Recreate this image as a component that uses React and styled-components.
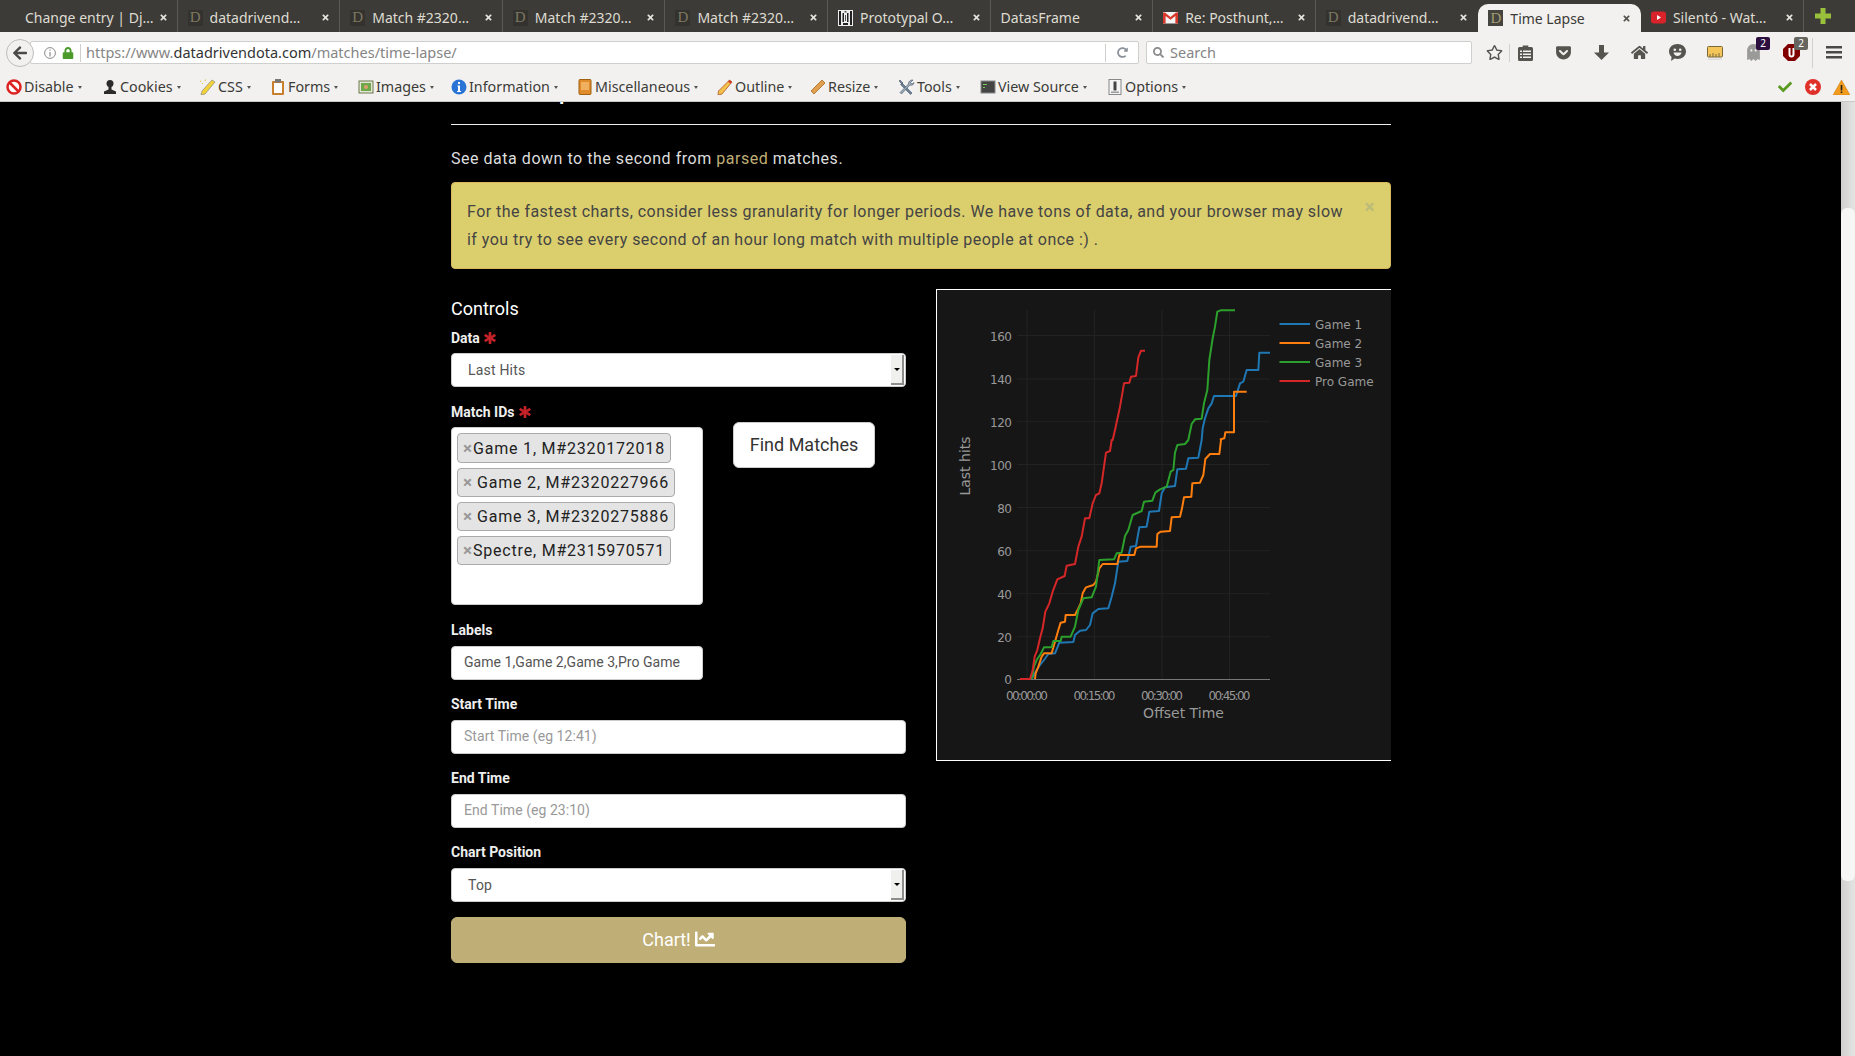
import React from 'react';
import styled, { createGlobalStyle } from 'styled-components';
import { FaAsterisk, FaChartLine, FaRegStar, FaHome, FaGhost, FaGetPocket, FaCheck, FaSearch, FaArrowLeft, FaRedoAlt, FaLock, FaTimes } from 'react-icons/fa';

const GlobalStyle = createGlobalStyle`
  html, body {
    margin: 0;
    height: 100%;
    overflow: hidden;
    background: #000;
    font-family: Roboto, "Liberation Sans", sans-serif;
  }
  * { box-sizing: border-box; }
`;

const Page = styled.div`
  display: flex;
  flex-direction: column;
  height: 100vh;
`;

/* browser chrome */
const ChromeFont = `"Noto Sans", "Open Sans", sans-serif`;

const TabStrip = styled.div`
  display: flex;
  align-items: flex-end;
  height: 32px;
  padding-left: 15px;
  background: #3c3b37;
  font-family: ${ChromeFont};
`;

const Tab = styled.div`
  position: relative;
  display: flex;
  align-items: center;
  flex: 0 0 162.6px;
  height: ${p => (p.$active ? '28px' : '32px')};
  padding: ${p => (p.$active ? '0' : '3px')} 8px 0 10px;
  font-size: 14px;
  color: ${p => (p.$active ? '#3c3b37' : '#dfdbd2')};
  background: ${p => (p.$active ? '#f2f1f0' : 'transparent')};
  border-right: 1px solid ${p => (p.$active || p.$beforeActive ? 'transparent' : '#5a5954')};
  border-radius: ${p => (p.$active ? '10px 10px 0 0' : '0')};
`;

const TabLabel = styled.span`
  flex: 1;
  white-space: nowrap;
  overflow: hidden;
`;

const TabClose = styled.span`
  display: flex;
  width: 10px;
  margin-left: 4px;
  color: ${p => (p.$active ? '#55544f' : '#e6e3dc')};
  font-size: 9px;
`;

const Favicon = styled.span`
  display: flex;
  align-items: center;
  justify-content: center;
  flex: 0 0 15px;
  height: 16px;
  margin-right: 7px;
  background: ${p => (p.$active ? '#45443f' : '#33322e')};
  color: ${p => (p.$active ? '#a39a70' : '#7d7862')};
  font-family: "Liberation Serif", serif;
  font-size: 15px;
  line-height: 1;
`;

const IconSlot = styled.span`
  display: flex;
  flex: 0 0 15px;
  margin-right: 7px;
`;

const AddTab = styled.span`
  display: flex;
  align-items: center;
  justify-content: center;
  width: 38px;
  height: 32px;
`;

const NavBar = styled.div`
  display: flex;
  align-items: center;
  height: 41px;
  padding-left: 6px;
  background: #f2f1f0;
  font-family: ${ChromeFont};
`;

const BackButton = styled.div`
  position: relative;
  z-index: 1;
  display: flex;
  align-items: center;
  justify-content: center;
  flex: 0 0 28px;
  height: 28px;
  margin-right: -4px;
  border: 1px solid #bdbdbb;
  border-radius: 50%;
  background: #f2f1f0;
  color: #4a4945;
  font-size: 16px;
`;

const InputBar = styled.div`
  display: flex;
  align-items: center;
  flex: 0 0 ${p => p.$w}px;
  height: 23px;
  margin-left: ${p => p.$ml || 0}px;
  background: #fff;
  border: 1px solid #cfcfcd;
  border-radius: 2px;
  font-size: 14.5px;
  color: #858585;
  white-space: nowrap;
`;

const UrlIcons = styled.span`
  display: flex;
  align-items: center;
  gap: 6px;
  width: 50px;
  padding-left: 13px;
  height: 100%;
`;

const LockIcon = styled.span`
  display: flex;
  color: #4c9a2a;
  font-size: 12px;
`;

const BarSep = styled.span`
  width: 1px;
  height: 18px;
  background: #cfcfcd;
`;

const UrlText = styled.span`
  flex: 1;
  margin-top: -2px;
  padding-left: 5px;
`;

const SearchText = styled.span`
  margin-top: -2px;
`;

const UrlHost = styled.span`
  color: #333;
`;

const Reload = styled.span`
  display: flex;
  align-items: center;
  justify-content: center;
  width: 32px;
  color: #8b9299;
  font-size: 11px;
`;

const SearchIcon = styled.span`
  display: flex;
  padding: 0 6px 0 6px;
  color: #8a8a8a;
  font-size: 11px;
`;

const Slot = styled.span`
  position: relative;
  display: flex;
  align-items: center;
  justify-content: center;
  flex: 0 0 ${p => p.$w || 38}px;
  margin-left: ${p => p.$ml || 0}px;
  margin-right: ${p => p.$mr || 0}px;
  height: 24px;
  color: ${p => p.$color || '#55544f'};
  font-size: 17px;
`;

const VSep = styled.span`
  flex: 0 0 1px;
  height: ${p => p.$h || 18}px;
  margin-left: ${p => p.$ml || 0}px;
  background: #d0d0ce;
`;

const Badge = styled.span`
  position: absolute;
  top: -4px;
  left: 22px;
  width: 14px;
  height: 13px;
  background: ${p => p.$bg};
  color: #fff;
  font-size: 10px;
  line-height: 13px;
  text-align: center;
  border-radius: 2px;
`;

const DevBar = styled.div`
  display: flex;
  align-items: center;
  height: 29px;
  padding-left: 6px;
  background: #f2f1f0;
  border-bottom: 1px solid #c9c9c7;
  font-family: ${ChromeFont};
  font-size: 14.3px;
  color: #3c3b37;
`;

const DevItem = styled.div`
  display: flex;
  align-items: center;
  flex: 0 0 ${p => p.$w}px;
  white-space: nowrap;
`;

const DevIcon = styled.span`
  display: flex;
  flex: 0 0 16px;
  margin-right: 2px;
`;

const DevLabel = styled.span`
  margin-top: -2px;
`;

const Caret = styled.span`
  width: 0;
  height: 0;
  margin-left: 4px;
  border-left: 2.5px solid transparent;
  border-right: 2.5px solid transparent;
  border-top: 3px solid #55544f;
`;

const DevStatus = styled.div`
  display: flex;
  margin-left: auto;
`;

const StatusIcon = styled.span`
  display: flex;
  align-items: center;
  justify-content: center;
  width: 28px;
  color: #5a9a1e;
  font-size: 14px;
`;

/* page */
const Viewport = styled.div`
  display: flex;
  flex: 1;
  min-height: 0;
`;

const Main = styled.main`
  flex: 1;
  min-width: 0;
  padding-left: 1px;
  overflow: hidden;
  background: #000;
`;

const Container = styled.div`
  width: 940px;
  margin: 0 auto;
`;

const PageHeader = styled.div`
  height: 23px;
  margin-bottom: 22px;
  border-bottom: 1px solid #eee;
  overflow: hidden;
  display: flex;
  align-items: flex-end;
`;

const Title = styled.h2`
  margin: 0 0 20px;
  font-size: 30px;
  font-weight: 400;
  line-height: 33px;
  color: #fff;
`;

const Lead = styled.p`
  margin: 0 0 11px;
  font-size: 16px;
  line-height: 24px;
  letter-spacing: 0.53px;
  color: #ddd;
`;

const Parsed = styled.a`
  color: #bfae76;
`;

const Alert = styled.div`
  position: relative;
  height: 87px;
  margin-bottom: 20px;
  padding: 15px 40px 15px 15px;
  background: #dbce6c;
  border: 1px solid #d6b95c;
  border-radius: 4px;
  font-size: 16px;
  line-height: 28px;
  letter-spacing: 0.46px;
  color: #444;
`;

const AlertClose = styled.span`
  position: absolute;
  top: 14px;
  right: 15px;
  font-size: 19px;
  font-weight: 700;
  line-height: 20px;
  color: #bcbb7a;
`;

const Columns = styled.div`
  display: grid;
  grid-template-columns: 455px 455px;
  column-gap: 30px;
`;

const SectionTitle = styled.h4`
  margin: 0;
  height: 38px;
  padding-top: 1px;
  font-size: 18px;
  font-weight: 400;
  line-height: 38px;
  color: #fff;
`;

const Label = styled.label`
  display: flex;
  align-items: center;
  gap: 4px;
  height: 20px;
  margin-bottom: 6px;
  padding-top: ${p => (p.$plain ? 0 : 2)}px;
  font-size: 14px;
  font-weight: 700;
  color: #eee;
`;

const Required = styled.span`
  display: flex;
  color: #c9242b;
  font-size: 12px;
  svg {
    stroke: currentColor;
    stroke-width: 30;
  }
`;

const Group = styled.div`
  margin-bottom: ${p => p.$mb || 14}px;
`;

const SelectBox = styled.div`
  display: flex;
  align-items: center;
  justify-content: space-between;
  height: 34px;
  padding: 0 1px 0 16px;
  background: #fff;
  border: 1px solid #ccc;
  border-radius: 4px;
  font-size: 14px;
  letter-spacing: 0.2px;
  color: #555;
`;

const SelectArrow = styled.span`
  display: flex;
  align-items: center;
  justify-content: center;
  width: 13px;
  height: 30px;
  background: #f0f0ee;
  border-right: 2px solid #8d8d8b;
  border-bottom: 2px solid #8d8d8b;
  &::after {
    content: '';
    border-left: 3px solid transparent;
    border-right: 3px solid transparent;
    border-top: 3px solid #000;
  }
`;

const TextInput = styled.input`
  display: block;
  width: 100%;
  height: 34px;
  padding: 0 12px 2px;
  background: #fff;
  border: 1px solid #ccc;
  border-radius: 4px;
  font-family: Roboto, sans-serif;
  font-size: 14px;
  letter-spacing: 0.05px;
  color: #555;
  &::placeholder {
    color: #999;
    opacity: 1;
  }
`;

const MatchRow = styled.div`
  display: flex;
  gap: 30px;
`;

const MatchField = styled.div`
  flex: 0 0 252px;
`;

const MultiBox = styled.div`
  display: flex;
  flex-direction: column;
  align-items: flex-start;
  gap: 5px;
  height: 178px;
  padding: 5px;
  background: #fff;
  border: 1px solid #ccc;
  border-radius: 4px;
`;

const Chip = styled.div`
  display: flex;
  align-items: center;
  height: 29px;
  padding: 0 5px 0 7px;
  background: #e4e4e4;
  border: 1px solid #aaa;
  border-radius: 4px;
  font-size: 16px;
  letter-spacing: 0.8px;
  color: #222;
  white-space: nowrap;
  &:first-child {
    height: 30px;
    padding-top: 1px;
  }
`;

const ChipRemove = styled.span`
  width: ${p => (p.$wide ? '14px' : '10px')};
  margin-left: -2px;
  font-size: 17px;
  font-weight: 700;
  letter-spacing: 0;
  line-height: 1;
  color: #999;
`;

const FindButton = styled.button`
  align-self: flex-start;
  height: 46px;
  width: 142px;
  margin-top: 21px;
  padding: 0 0 2px;
  background: #fff;
  border: 1px solid #ccc;
  border-radius: 6px;
  font-family: Roboto, sans-serif;
  font-size: 18px;
  color: #333;
`;

const ChartButton = styled.button`
  display: flex;
  align-items: center;
  justify-content: center;
  gap: 4px;
  width: 100%;
  height: 46px;
  padding: 0 0 2px;
  background: #bfae76;
  border: 1px solid #bfae76;
  border-radius: 6px;
  font-family: Roboto, sans-serif;
  font-size: 18px;
  color: #fff;
  svg {
    font-size: 20px;
  }
`;

const ChartBox = styled.div`
  height: 472px;
  border: 1px solid #fff;
  border-right: 0;
  background: #161616;
`;

const ChartSvg = styled.svg`
  display: block;
  width: 454px;
  height: 470px;
  font-family: "DejaVu Sans", sans-serif;
`;

const Scrollbar = styled.div`
  flex: 0 0 14px;
  padding-top: 106px;
  background: linear-gradient(to right, #d0d0ce, #e4e4e2);
`;

const ScrollThumb = styled.div`
  height: 673px;
  background: #f6f6f5;
  border-radius: 6px;
`;

/* favicons and toolbar drawings */
const GmailIcon = () => (
  <svg width="15" height="15" viewBox="0 0 15 15">
    <rect y="2" width="15" height="11.5" fill="#f4f4f4" />
    <path d="M0 2.5v11h2.6V6l4.9 3.8L12.4 6v7.5H15v-11h-2L7.5 7 2 2.5z" fill="#d8382c" />
  </svg>
);
const YoutubeIcon = () => (
  <svg width="15" height="15" viewBox="0 0 15 15">
    <rect y="1.5" width="15" height="12" rx="3" fill="#d9232a" />
    <path d="M6 5l4 2.5L6 10z" fill="#fff" />
  </svg>
);
const ProtoIcon = () => (
  <svg width="15" height="16" viewBox="0 0 15 16">
    <rect width="15" height="16" fill="#eee" />
    <path d="M1 1h2v14H1zM4.5 3h1.5v9H4.5zM9 3h1.5v9H9zM12 1h2v14h-2zM5 13h5v2H5z" fill="#222" />
    <path d="M6.5 1h2v1.5h-2zM7 5h1v6H7z" fill="#555" />
  </svg>
);
const PlusIcon = () => (
  <svg width="16" height="16" viewBox="0 0 16 16">
    <path d="M5.5 0h5v5.5H16v5h-5.5V16h-5v-5.5H0v-5h5.5z" fill="#9ac13c" />
  </svg>
);
const ClipboardIcon = () => (
  <svg width="15" height="17" viewBox="0 0 15 17">
    <path d="M1.5 3h3.2V1.5h5.6V3h3.2A1.5 1.5 0 0 1 15 4.5v11a1.5 1.5 0 0 1-1.5 1.5h-12A1.5 1.5 0 0 1 0 15.5v-11A1.5 1.5 0 0 1 1.5 3z" fill="#55544f" />
    <path d="M2 6.5h2V8H2zM5 6.5h8V8H5zM2 9.5h2V11H2zM5 9.5h8V11H5zM2 12.5h2V14H2zM5 12.5h8V14H5z" fill="#f2f1f0" />
  </svg>
);
const DownloadIcon = () => (
  <svg width="15" height="15" viewBox="0 0 15 15">
    <path d="M5 0h5v7.5h5L7.5 15 0 7.5h5z" fill="#55544f" />
  </svg>
);
const ChatIcon = () => (
  <svg width="17" height="17" viewBox="0 0 17 17">
    <path d="M8.5 0C13.2 0 17 3.1 17 7.5S13.2 15 8.5 15c-1 0-2-.2-2.9-.5L2 17l.6-4C1 11.6 0 9.7 0 7.5 0 3.1 3.8 0 8.5 0z" fill="#55544f" />
    <circle cx="5.8" cy="5.8" r="1.3" fill="#f2f1f0" />
    <circle cx="11.2" cy="5.8" r="1.3" fill="#f2f1f0" />
    <path d="M4.5 8.5h8c-.5 2.2-2 3.5-4 3.5s-3.500-1.300-4-3.500z" fill="#f2f1f0" />
  </svg>
);
const RulerIcon = () => (
  <svg width="16" height="14" viewBox="0 0 16 14">
    <rect x=".5" y=".5" width="15" height="10.5" rx="1" fill="#f4c65a" stroke="#7a6a3a" />
    <path d="M3 11V8M6 11V7M9 11V8M12 11V7" stroke="#7a6a3a" />
    <rect x="1" y="12.5" width="14" height="1.5" fill="#ddd" />
  </svg>
);
const ShieldIcon = () => (
  <svg width="17" height="17" viewBox="0 0 17 17">
    <path d="M5 0h7l5 5v7l-5 5H5l-5-5V5z" fill="#800000" />
    <path d="M5.5 4h2v6c0 1 .4 1.5 1 1.5s1-.5 1-1.5V4h2v6.5c0 2-1.2 3-3 3s-3-1-3-3z" fill="#fff" />
  </svg>
);
const MenuIcon = () => (
  <svg width="16" height="13" viewBox="0 0 16 13">
    <path d="M0 0h16v2.5H0zM0 5h16v2.5H0zM0 10h16v2.5H0z" fill="#4a4945" />
  </svg>
);
const InfoIcon = () => (
  <svg width="12" height="12" viewBox="0 0 12 12">
    <circle cx="6" cy="6" r="5.4" fill="none" stroke="#8b8b8b" />
    <path d="M5.4 2.5h1.2v1.300H5.4zM5.4 5h1.2v4.5H5.4z" fill="#8b8b8b" />
  </svg>
);

const dev = {
  disable: (
    <svg width="16" height="16" viewBox="0 0 16 16">
      <circle cx="8" cy="8" r="6.5" fill="#fff" stroke="#d22" strokeWidth="2.5" />
      <path d="M3.5 3.5l9 9" stroke="#d22" strokeWidth="2.5" />
    </svg>
  ),
  cookies: (
    <svg width="16" height="16" viewBox="0 0 16 16">
      <circle cx="8" cy="4.5" r="3.5" fill="#2b2b2b" />
      <path d="M6.5 7h3v3.5L14 12.5V15H2v-2.5l4.5-2z" fill="#2b2b2b" />
    </svg>
  ),
  css: (
    <svg width="16" height="16" viewBox="0 0 16 16">
      <path d="M12 1l3 2L5 15l-4 1 1-4z" fill="#f4d33a" stroke="#777" strokeWidth=".6" />
      <path d="M2 5l1-1M5 2l.5-1.5M1 2.5L0 2" stroke="#e8c52a" />
    </svg>
  ),
  forms: (
    <svg width="16" height="16" viewBox="0 0 16 16">
      <rect x="2" y="2" width="12" height="14" rx="1" fill="#c87f2e" />
      <rect x="4" y="4" width="8" height="10" fill="#fff" />
      <rect x="5" y="0" width="6" height="3.5" fill="#777" />
    </svg>
  ),
  images: (
    <svg width="16" height="16" viewBox="0 0 16 16">
      <rect x="1" y="2" width="14" height="12" fill="#e6e6d8" stroke="#6a7a4a" />
      <rect x="3" y="4" width="10" height="8" fill="#6da84a" />
      <circle cx="8" cy="8" r="2" fill="#e0a070" />
    </svg>
  ),
  information: (
    <svg width="16" height="16" viewBox="0 0 16 16">
      <circle cx="8" cy="8" r="7.5" fill="#2a74d6" />
      <path d="M7 3h2v2H7zM6.5 6.5H9V12h1v1H6v-1h1V7.5h-.5z" fill="#fff" />
    </svg>
  ),
  misc: (
    <svg width="16" height="16" viewBox="0 0 16 16">
      <rect x="2" y="0.5" width="12" height="15" rx="1" fill="#e08c2a" stroke="#a06010" />
      <rect x="4" y="3" width="8" height="8" fill="#f0b060" />
    </svg>
  ),
  outline: (
    <svg width="16" height="16" viewBox="0 0 16 16">
      <path d="M12.5 1L15 3 5 15l-4 1 .5-4z" fill="#f2c14a" stroke="#b4532a" strokeWidth=".8" />
      <path d="M12.5 1L15 3l-1.5 1.8-2.5-2z" fill="#d03a2a" />
    </svg>
  ),
  resize: (
    <svg width="16" height="16" viewBox="0 0 16 16">
      <path d="M12 1l3 3L4 15l-3-3z" fill="#e0a050" stroke="#a86a20" strokeWidth=".8" />
    </svg>
  ),
  tools: (
    <svg width="17" height="16" viewBox="0 0 17 16">
      <path d="M2 1l3 3-1 1-3-3zM4 4l10 10-1.5 1.5-10-10z" fill="#6a7f98" stroke="#345" strokeWidth=".5" />
      <path d="M15 1l-2.5 2.5L14 5l2-1.5c0 2-2 3.5-4 2.5L3.5 15 2 13.5 10.5 5C10 3 12.5 0.5 15 1z" fill="#9aa9b8" stroke="#345" strokeWidth=".5" />
    </svg>
  ),
  source: (
    <svg width="16" height="16" viewBox="0 0 16 16">
      <rect x="1" y="2" width="14" height="12" fill="#444" stroke="#888" />
      <path d="M3 5h4v1H3zM3 8h2v1H3z" fill="#7c5" />
    </svg>
  ),
  options: (
    <svg width="16" height="16" viewBox="0 0 16 16">
      <rect x="2" y="0.5" width="12" height="15" fill="#f4f4f4" stroke="#888" />
      <rect x="6.5" y="2.5" width="3" height="9" fill="#444" />
      <rect x="4" y="12.5" width="8" height="1.5" fill="#999" />
    </svg>
  ),
};

const tabs = [
  { label: 'Change entry | Dj…', icon: null },
  { label: 'datadrivend…', icon: 'd' },
  { label: 'Match #2320…', icon: 'd' },
  { label: 'Match #2320…', icon: 'd' },
  { label: 'Match #2320…', icon: 'd' },
  { label: 'Prototypal O…', icon: 'p' },
  { label: 'DatasFrame', icon: null },
  { label: 'Re: Posthunt,…', icon: 'g' },
  { label: 'datadrivend…', icon: 'd' },
  { label: 'Time Lapse', icon: 'd', active: true },
  { label: 'Silentó - Wat…', icon: 'y' },
];

const devItems = [
  ['Disable', 'disable', 96],
  ['Cookies', 'cookies', 98],
  ['CSS', 'css', 70],
  ['Forms', 'forms', 88],
  ['Images', 'images', 93],
  ['Information', 'information', 126],
  ['Miscellaneous', 'misc', 140],
  ['Outline', 'outline', 93],
  ['Resize', 'resize', 88],
  ['Tools', 'tools', 82],
  ['View Source', 'source', 127],
  ['Options', 'options', 90],
];

const chips = [
  { text: 'Game 1, M#2320172018' },
  { text: 'Game 2, M#2320227966', wide: true },
  { text: 'Game 3, M#2320275886', wide: true },
  { text: 'Spectre, M#2315970571' },
];

const TabIcon = ({ kind, active }) => {
  if (kind === 'd') return <Favicon $active={active}>D</Favicon>;
  if (kind === 'p') return <IconSlot><ProtoIcon /></IconSlot>;
  if (kind === 'g') return <IconSlot><GmailIcon /></IconSlot>;
  if (kind === 'y') return <IconSlot><YoutubeIcon /></IconSlot>;
  return null;
};

/* chart data, read off in zoomed crops: origin + px/3 */
const crop = (ox, oy, pts) => pts.map(([x, y]) => [ox + x / 3, oy + y / 3]);
const A = (pts) => crop(1020, 440, pts);
const B = (pts) => crop(1130, 300, pts);
const C = (pts) => crop(930, 280, pts);

const traces = [
  {
    name: 'Game 1', color: '#1f77b4',
    points: [
      ...A([[35, 717], [50, 690], [60, 675], [72, 660], [85, 642], [105, 640], [118, 608], [160, 606], [165, 585], [180, 572], [198, 570], [210, 555], [218, 520], [235, 507], [265, 505], [275, 470], [285, 430], [295, 365], [322, 363], [332, 320], [348, 318], [358, 262], [380, 260], [388, 215], [417, 213], [425, 160], [435, 142], [465, 138], [472, 88], [498, 86], [505, 55], [535, 53], [545, 0]]),
      ...B([[218, 385], [225, 355], [235, 325], [245, 310], [252, 288], [318, 288], [330, 250], [340, 245], [350, 210], [385, 210], [388, 158], [420, 158]]),
    ],
  },
  {
    name: 'Game 2', color: '#ff7f0e',
    points: [
      ...A([[45, 717], [47, 700], [55, 680], [65, 650], [72, 640], [95, 640], [105, 605], [115, 570], [122, 548], [135, 545], [137, 525], [165, 525], [175, 505], [182, 490], [188, 460], [198, 442], [220, 435], [228, 425], [238, 385], [248, 372], [292, 372], [298, 345], [343, 345], [348, 325], [362, 320], [410, 320], [412, 282], [422, 275], [450, 273], [455, 232], [480, 230], [486, 205], [492, 172], [514, 170], [517, 130], [540, 128], [550, 105], [556, 57], [570, 42], [598, 42], [603, 0]]),
      ...B([[272, 418], [283, 415], [286, 397], [312, 397], [312, 275], [350, 275]]),
    ],
  },
  {
    name: 'Game 3', color: '#2ca02c',
    points: [
      ...A([[35, 717], [42, 680], [50, 660], [62, 642], [72, 622], [95, 622], [100, 603], [122, 603], [125, 590], [152, 590], [165, 560], [175, 510], [190, 475], [215, 472], [228, 440], [238, 360], [282, 358], [290, 340], [305, 338], [315, 288], [325, 270], [338, 225], [365, 213], [372, 185], [397, 182], [406, 158], [420, 148], [440, 140], [452, 95], [460, 90], [465, 38], [472, 15], [495, 12], [505, 0]]),
      ...B([[178, 405], [185, 372], [195, 358], [215, 356], [222, 310], [232, 270], [238, 180], [248, 115], [255, 80], [262, 35], [272, 31], [315, 31]]),
    ],
  },
  {
    name: 'Pro Game', color: '#d62728',
    points: [
      ...A([[0, 717], [30, 717], [38, 690], [44, 650], [52, 630], [60, 595], [68, 565], [76, 515], [88, 490], [98, 455], [112, 418], [134, 408], [140, 377], [165, 372], [175, 320], [185, 290], [195, 235], [208, 235], [218, 190], [228, 165], [238, 160], [245, 130], [252, 80], [258, 38], [270, 33], [275, 0]]),
      ...C([[548, 480], [555, 450], [570, 380], [577, 340], [582, 310], [598, 308], [603, 290], [618, 288], [625, 232], [633, 212], [645, 212]]),
    ],
  },
];

const yTicks = [
  [0, 679.3], [20, 636.7], [40, 593.7], [60, 550.7], [80, 507.5],
  [100, 464.5], [120, 421.7], [140, 379], [160, 335.5],
];
const xTicks = [[1027, '00:00:00'], [1094.5, '00:15:00'], [1162, '00:30:00'], [1229.5, '00:45:00']];

const LapseChart = () => (
  <ChartSvg viewBox="937 290 454 470">
    <g stroke="#222" strokeWidth="1">
      {xTicks.map(([x]) => <line key={x} x1={x} x2={x} y1="310" y2="679" />)}
      {yTicks.slice(1).map(([v, y]) => <line key={v} x1="1017" x2="1270" y1={y} y2={y} />)}
    </g>
    <line x1="1017" x2="1270" y1="679.5" y2="679.5" stroke="#777" />
    {traces.map(t => (
      <polyline
        key={t.name}
        points={t.points.map(p => p.join(',')).join(' ')}
        fill="none"
        stroke={t.color}
        strokeWidth="2"
        strokeLinejoin="round"
      />
    ))}
    <g fill="#999" fontSize="12">
      {yTicks.map(([v, y]) => (
        <text key={v} x="1011.5" y={y + 5} textAnchor="end" letterSpacing="-0.5">{v}</text>
      ))}
      {xTicks.map(([x, t]) => (
        <text key={t} x={x} y="699.5" textAnchor="middle" textLength="42" lengthAdjust="spacing">{t}</text>
      ))}
    </g>
    <text x="1183.5" y="718" textAnchor="middle" fontSize="14" fill="#999">Offset Time</text>
    <text transform="translate(970 466) rotate(-90)" textAnchor="middle" fontSize="14" fill="#999">Last hits</text>
    {traces.map((t, i) => {
      const y = 324 + i * 19;
      return (
        <g key={t.name}>
          <line x1="1279.5" x2="1310" y1={y} y2={y} stroke={t.color} strokeWidth="2" />
          <text x="1315" y={y + 5} fontSize="12" fill="#999">{t.name}</text>
        </g>
      );
    })}
  </ChartSvg>
);

export default function App() {
  return (
    <Page>
      <GlobalStyle />
      <TabStrip>
        {tabs.map((t, i) => (
          <Tab key={i} $active={t.active} $beforeActive={tabs[i + 1] && tabs[i + 1].active}>
            <TabIcon kind={t.icon} active={t.active} />
            <TabLabel>{t.label}</TabLabel>
            <TabClose $active={t.active}><FaTimes /></TabClose>
          </Tab>
        ))}
        <AddTab><PlusIcon /></AddTab>
      </TabStrip>

      <NavBar>
        <BackButton><FaArrowLeft /></BackButton>
        <InputBar $w={1109}>
          <UrlIcons>
            <InfoIcon />
            <LockIcon><FaLock /></LockIcon>
            <BarSep />
          </UrlIcons>
          <UrlText>https://www.<UrlHost>datadrivendota.com</UrlHost>/matches/time-lapse/</UrlText>
          <BarSep />
          <Reload><FaRedoAlt /></Reload>
        </InputBar>
        <InputBar $w={326} $ml={7}>
          <SearchIcon><FaSearch /></SearchIcon>
          <SearchText>Search</SearchText>
        </InputBar>
        <Slot $w={30} $ml={7}><FaRegStar /></Slot>
        <VSep />
        <Slot $w={30} $mr={4}><ClipboardIcon /></Slot>
        <Slot><FaGetPocket /></Slot>
        <Slot><DownloadIcon /></Slot>
        <Slot><FaHome /></Slot>
        <Slot><ChatIcon /></Slot>
        <Slot><RulerIcon /></Slot>
        <Slot $color="#9a9a98"><FaGhost /><Badge $bg="#2c0f3f">2</Badge></Slot>
        <Slot><ShieldIcon /><Badge $bg="#66655f">2</Badge></Slot>
        <VSep $h={30} $ml={2} />
        <Slot $w={42}><MenuIcon /></Slot>
      </NavBar>

      <DevBar>
        {devItems.map(([label, icon, w]) => (
          <DevItem key={label} $w={w}>
            <DevIcon>{dev[icon]}</DevIcon>
            <DevLabel>{label}</DevLabel>
            <Caret />
          </DevItem>
        ))}
        <DevStatus>
          <StatusIcon><FaCheck /></StatusIcon>
          <StatusIcon>
            <svg width="16" height="16" viewBox="0 0 16 16">
              <circle cx="8" cy="8" r="8" fill="#e0302a" />
              <path d="M5 5l6 6M11 5l-6 6" stroke="#fff" strokeWidth="2.5" />
            </svg>
          </StatusIcon>
          <StatusIcon>
            <svg width="17" height="15" viewBox="0 0 17 15">
              <path d="M8.5 0L17 15H0z" fill="#f29b1d" stroke="#c87a10" strokeWidth=".5" />
              <path d="M7.7 5h1.6v5.5H7.7zM7.7 11.5h1.6V13H7.7z" fill="#222" />
            </svg>
          </StatusIcon>
        </DevStatus>
      </DevBar>

      <Viewport>
        <Main>
          <Container>
            <PageHeader><Title>Time Lapse</Title></PageHeader>
            <Lead>See data down to the second from <Parsed>parsed</Parsed> matches.</Lead>
            <Alert>
              <AlertClose>×</AlertClose>
              For the fastest charts, consider less granularity for longer periods. We have tons of data, and your browser may slow if you try to see every second of an hour long match with multiple people at once :) .
            </Alert>
            <Columns>
              <div>
                <SectionTitle>Controls</SectionTitle>
                <Group>
                  <Label>Data <Required><FaAsterisk /></Required></Label>
                  <SelectBox>Last Hits<SelectArrow /></SelectBox>
                </Group>
                <MatchRow>
                  <MatchField>
                    <Group $mb={15}>
                      <Label>Match IDs <Required><FaAsterisk /></Required></Label>
                      <MultiBox>
                        {chips.map(c => (
                          <Chip key={c.text}>
                            <ChipRemove $wide={c.wide}>×</ChipRemove>
                            {c.text}
                          </Chip>
                        ))}
                      </MultiBox>
                    </Group>
                    <Group>
                      <Label $plain>Labels</Label>
                      <TextInput readOnly value="Game 1,Game 2,Game 3,Pro Game" />
                    </Group>
                  </MatchField>
                  <FindButton>Find Matches</FindButton>
                </MatchRow>
                <Group>
                  <Label $plain>Start Time</Label>
                  <TextInput placeholder="Start Time (eg 12:41)" />
                </Group>
                <Group>
                  <Label $plain>End Time</Label>
                  <TextInput placeholder="End Time (eg 23:10)" />
                </Group>
                <Group $mb={15}>
                  <Label $plain>Chart Position</Label>
                  <SelectBox>Top<SelectArrow /></SelectBox>
                </Group>
                <ChartButton>Chart! <FaChartLine /></ChartButton>
              </div>
              <ChartBox><LapseChart /></ChartBox>
            </Columns>
          </Container>
        </Main>
        <Scrollbar><ScrollThumb /></Scrollbar>
      </Viewport>
    </Page>
  );
}
